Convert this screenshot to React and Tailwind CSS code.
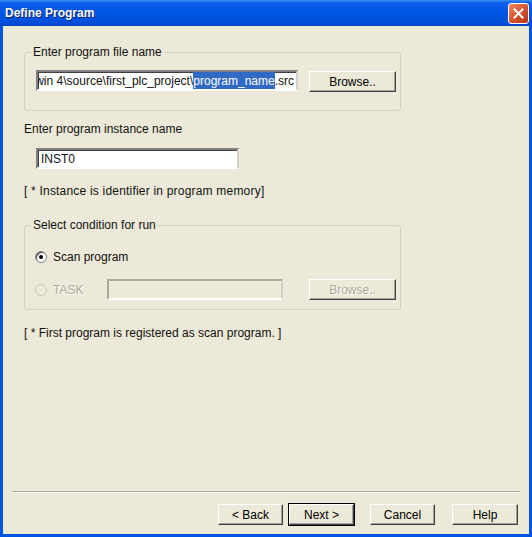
import React from 'react';

const font = "font-['Liberation_Sans',Arial,sans-serif]";

const Button = ({ children, isDefault, disabled, className = '' }) => (
  <div className={`${isDefault ? 'border border-black' : 'border border-transparent'} ${className}`}>
    <div
      className={`h-full flex items-center justify-center bg-[#ece9d8] border border-t-white border-l-white border-b-[#404040] border-r-[#404040] shadow-[inset_-1px_-1px_0_#a0a0a0] text-[12px] ${
        disabled ? 'text-[#aca899] [text-shadow:1px_1px_0_#fff]' : 'text-black'
      }`}
    >
      {children}
    </div>
  </div>
);

const Radio = ({ checked, disabled }) => (
  <div
    className={`w-[12px] h-[12px] rounded-full border flex items-center justify-center ${
      disabled ? 'border-[#c9c7ba] bg-[#ece9d8]' : 'border-[#7f7f7f] bg-white shadow-[inset_1px_1px_0_#404040]'
    }`}
  >
    {checked && <div className="w-[4px] h-[4px] rounded-full bg-black" />}
  </div>
);

const Sunken = ({ children, className = '', disabled }) => (
  <div
    className={`border-2 border-t-[#808080] border-l-[#808080] border-b-white border-r-[#d4d0c8] ${
      disabled ? 'bg-[#ece9d8]' : 'bg-white shadow-[inset_1px_1px_0_#404040]'
    } flex items-center overflow-hidden whitespace-nowrap text-[12px] ${className}`}
  >
    {children}
  </div>
);

export default function App() {
  return (
    <div className={`w-[532px] h-[537px] flex flex-col bg-[#0054e3] ${font} text-[#111]`}>
      {/* title bar */}
      <div className="h-[26px] shrink-0 flex items-center justify-between pl-[5px] pr-[3px] bg-[linear-gradient(to_bottom,#3a8af5_0%,#0a5ee8_12%,#0054e3_50%,#0050dc_85%,#0044c8_100%)]">
        <span className="text-white font-bold text-[12px] [text-shadow:1px_1px_0_#0a246a]">Define Program</span>
        <div className="w-[21px] h-[21px] rounded-[3px] border border-white bg-[linear-gradient(135deg,#ee8a66,#d4502c_55%,#b63316)] flex items-center justify-center">
          <svg width="11" height="11" viewBox="0 0 11 11">
            <path d="M1.5 1.5 L9.5 9.5 M9.5 1.5 L1.5 9.5" stroke="#fff" strokeWidth="2" strokeLinecap="square" />
          </svg>
        </div>
      </div>

      {/* body */}
      <div className="flex-1 flex flex-col mx-[3px] mb-[3px] bg-[#ece9d8]">
        <div className="flex flex-col pl-[21px] pt-[19px] text-[12px]">
          <fieldset className="w-[377px] border border-[#d0d0bf] rounded-[3px] pt-[11px] pb-[17px]">
            <legend className="ml-[6px] px-[2px] leading-[14px]">Enter program file name</legend>
            <div className="flex items-start gap-[10px] pl-[11px]">
              <Sunken className="w-[262px] h-[21px] justify-end pr-[2px]">
                <span className="shrink-0">win 4\source\first_plc_project\</span>
                <span className="shrink-0 bg-[#316ac5] text-white">program_name</span>
                <span className="shrink-0">.src</span>
              </Sunken>
              <Button className="w-[89px] h-[23px]">Browse..</Button>
            </div>
          </fieldset>

          <div className="mt-[11px] leading-[14px]">Enter program instance name</div>
          <Sunken className="ml-[12px] mt-[12px] w-[203px] h-[21px] pl-[3px]">INST0</Sunken>
          <div className="mt-[15px] leading-[14px] tracking-[0.2px]">[ * Instance is identifier in program memory]</div>

          <fieldset className="mt-[20px] w-[377px] border border-[#d0d0bf] rounded-[3px] pt-[18px] pb-[8px]">
            <legend className="ml-[6px] px-[2px] leading-[14px]">Select condition for run</legend>
            <div className="flex items-center gap-[6px] h-[14px] pl-[10px]">
              <Radio checked />
              <span>Scan program</span>
            </div>
            <div className="flex items-center mt-[14px] h-[23px] pl-[10px]">
              <div className="w-[72px] flex items-center gap-[6px] text-[#aca899] [text-shadow:1px_1px_0_#fff]">
                <Radio disabled />
                <span>TASK</span>
              </div>
              <Sunken disabled className="w-[176px] h-[21px] border-t-[#aca899] border-l-[#aca899] shadow-none" />
              <Button disabled className="ml-[25px] w-[89px] h-[23px]">Browse..</Button>
            </div>
          </fieldset>

          <div className="mt-[16px] leading-[14px]">[ * First program is registered as scan program. ]</div>
        </div>

        <div className="flex-1" />

        <div className="mx-[9px] border-t border-t-[#aca899] border-b border-b-white" />
        <div className="flex justify-end pr-[10px] pt-[10px] pb-[8px] text-[12px]">
          <Button className="w-[67px] h-[23px]">&lt; Back</Button>
          <Button isDefault className="ml-[4px] w-[67px] h-[23px]">Next &gt;</Button>
          <Button className="ml-[14px] w-[67px] h-[23px]">Cancel</Button>
          <Button className="ml-[15px] w-[68px] h-[23px]">Help</Button>
        </div>
      </div>
    </div>
  );
}
